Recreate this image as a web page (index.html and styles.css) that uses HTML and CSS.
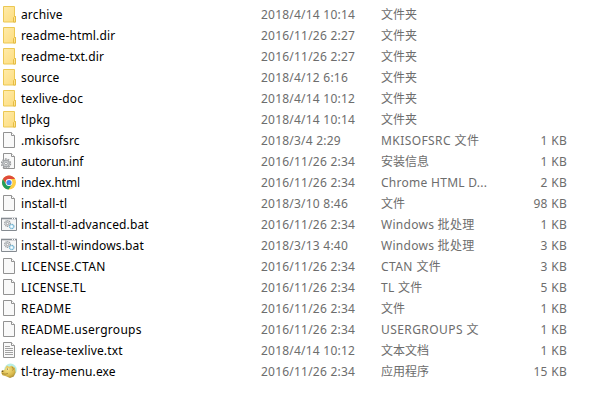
FILE: index.html
```html
<!DOCTYPE html>
<html lang="zh-CN">
<head>
<meta charset="utf-8">
<title>Files</title>
<link rel="stylesheet" href="styles.css">
</head>
<body>
<svg class="defs" width="0" height="0" aria-hidden="true">
  <linearGradient id="gold" x2="1" y2="1"><stop offset="0" stop-color="#ffebaa"/><stop offset="1" stop-color="#fddc7c"/></linearGradient>
  <radialGradient id="head" cx=".45" cy=".35" r=".75"><stop offset="0" stop-color="#f6e182"/><stop offset=".6" stop-color="#d9b94c"/><stop offset="1" stop-color="#987a2c"/></radialGradient>
  <symbol id="folder" viewBox="0 0 16 17">
    <path d="M2.500.5h11v10h1v5.500h-12z" fill="url(#gold)" stroke="#ecc853"/>
    <path d="M12.500 16v-4.500l1-1h1v5.500z" fill="#ffe391" stroke="#e5bc43"/>
  </symbol>
  <symbol id="page" viewBox="0 0 16 17">
    <path d="M2.500.5h8l3 3v12h-11z" fill="#f9f9f9" stroke="#929292"/>
    <path d="M10.500.5v3h3" fill="#fff" stroke="#929292"/>
  </symbol>
  <symbol id="text" viewBox="0 0 16 17">
    <use href="#page"/>
    <path d="M4 4.500h5M4 6.500h8M4 8.500h8M4 10.500h8M4 12.500h8" stroke="#a2a2a2"/>
  </symbol>
  <symbol id="inf" viewBox="0 0 16 17">
    <use href="#page"/>
    <circle cx="5" cy="10.500" r="4.500" fill="none" stroke="#96989a" stroke-width="1.400" stroke-dasharray="1.700 1.100"/>
    <circle cx="5" cy="10.500" r="3.200" fill="#d9dcde" stroke="#a4a7aa" stroke-width="1.400"/>
    <circle cx="5" cy="10.500" r="1.400" fill="#fff" stroke="#85898c" stroke-width=".8"/>
  </symbol>
  <symbol id="chrome" viewBox="0 0 16 17">
    <circle cx="8" cy="8.500" r="7" fill="#ffce43"/>
    <path d="M1.940 5A7 7 0 0 1 14.060 5H8L5 10.300z" fill="#df4a3b"/>
    <path d="M1.940 5A7 7 0 0 0 7.600 15.500L11 10.200L5 10.300z" fill="#239d5c"/>
    <circle cx="8" cy="8.500" r="3.400" fill="#fff"/>
    <circle cx="8" cy="8.500" r="2.600" fill="#4587ed"/>
  </symbol>
  <symbol id="bat" viewBox="0 0 16 17">
    <path d="M.5 2.500h15v12H.5z" fill="#f5f6f7" stroke="#858b91"/>
    <path d="M0 2.500h16" stroke="#858b91" stroke-width="1.600"/>
    <path d="M11 2.500h1M13 2.500h1" stroke="#fff"/>
    <circle cx="6.500" cy="7.500" r="2.800" fill="#e4e6e8" stroke="#95999d" stroke-width="1.200" stroke-dasharray="1.200 .6"/>
    <circle cx="6.500" cy="7.500" r="1.200" fill="#fff" stroke="#8b9095" stroke-width=".8"/>
    <circle cx="10.700" cy="10.500" r="2.200" fill="#d9f1fb" stroke="#74b3d1" stroke-width="1.200" stroke-dasharray="1.200 .4"/>
    <circle cx="10.700" cy="10.500" r=".8" fill="#fff"/>
  </symbol>
  <symbol id="lion" viewBox="0 0 16 17">
    <ellipse cx="9.500" cy="7" rx="6.300" ry="6.500" fill="#b9eee5"/>
    <path d="M4.500 4.500L6 2.500l2 1.200 2.800-1L14 5l.6 4.500-1.800 4-3.800 1.600L5 13.300l-3.500-1L.3 10l.6-2.300L4 6.500z" fill="url(#head)"/>
    <path d="M1 10.500l3 .7 3-.7M11 4l1.500 2-1 1.500" fill="none" stroke="#8a6c20" stroke-width=".6"/>
    <circle cx="6.800" cy="6" r="1.100" fill="#fff6b8"/><circle cx="6.600" cy="6" r=".55" fill="#302711"/>
    <ellipse cx="1.500" cy="8.300" rx="1" ry=".8" fill="#67501c"/>
  </symbol>
</svg>
<main class="files">
  <div class="row"><svg class="icon"><use href="#folder"/></svg><span class="name">archive</span><span class="date">2018/4/14 10:14</span><span class="type">文件夹</span><span class="size"></span></div>
  <div class="row"><svg class="icon"><use href="#folder"/></svg><span class="name">readme-html.dir</span><span class="date">2016/11/26 2:27</span><span class="type">文件夹</span><span class="size"></span></div>
  <div class="row"><svg class="icon"><use href="#folder"/></svg><span class="name">readme-txt.dir</span><span class="date">2016/11/26 2:27</span><span class="type">文件夹</span><span class="size"></span></div>
  <div class="row"><svg class="icon"><use href="#folder"/></svg><span class="name">source</span><span class="date">2018/4/12 6:16</span><span class="type">文件夹</span><span class="size"></span></div>
  <div class="row"><svg class="icon"><use href="#folder"/></svg><span class="name">texlive-doc</span><span class="date">2018/4/14 10:12</span><span class="type">文件夹</span><span class="size"></span></div>
  <div class="row"><svg class="icon"><use href="#folder"/></svg><span class="name">tlpkg</span><span class="date">2018/4/14 10:14</span><span class="type">文件夹</span><span class="size"></span></div>
  <div class="row"><svg class="icon"><use href="#page"/></svg><span class="name">.mkisofsrc</span><span class="date">2018/3/4 2:29</span><span class="type latin">MKISOFSRC 文件</span><span class="size">1 KB</span></div>
  <div class="row"><svg class="icon"><use href="#inf"/></svg><span class="name tight">autorun.inf</span><span class="date">2016/11/26 2:34</span><span class="type">安装信息</span><span class="size">1 KB</span></div>
  <div class="row"><svg class="icon"><use href="#chrome"/></svg><span class="name tight">index.html</span><span class="date">2016/11/26 2:34</span><span class="type mixed">Chrome HTML D...</span><span class="size">2 KB</span></div>
  <div class="row"><svg class="icon"><use href="#page"/></svg><span class="name">install-tl</span><span class="date">2018/3/10 8:46</span><span class="type">文件</span><span class="size">98 KB</span></div>
  <div class="row"><svg class="icon"><use href="#bat"/></svg><span class="name">install-tl-advanced.bat</span><span class="date">2016/11/26 2:34</span><span class="type mixed">Windows 批处理</span><span class="size">1 KB</span></div>
  <div class="row"><svg class="icon"><use href="#bat"/></svg><span class="name">install-tl-windows.bat</span><span class="date">2018/3/13 4:40</span><span class="type mixed">Windows 批处理</span><span class="size">3 KB</span></div>
  <div class="row"><svg class="icon"><use href="#page"/></svg><span class="name latin">LICENSE.CTAN</span><span class="date">2016/11/26 2:34</span><span class="type latin">CTAN 文件</span><span class="size">3 KB</span></div>
  <div class="row"><svg class="icon"><use href="#page"/></svg><span class="name mixed">LICENSE.TL</span><span class="date">2016/11/26 2:34</span><span class="type mixed">TL 文件</span><span class="size">5 KB</span></div>
  <div class="row"><svg class="icon"><use href="#page"/></svg><span class="name latin">README</span><span class="date">2016/11/26 2:34</span><span class="type">文件</span><span class="size">1 KB</span></div>
  <div class="row"><svg class="icon"><use href="#page"/></svg><span class="name mixed">README.usergroups</span><span class="date">2016/11/26 2:34</span><span class="type latin">USERGROUPS 文</span><span class="size">1 KB</span></div>
  <div class="row"><svg class="icon"><use href="#text"/></svg><span class="name">release-texlive.txt</span><span class="date">2018/4/14 10:12</span><span class="type">文本文档</span><span class="size">1 KB</span></div>
  <div class="row"><svg class="icon"><use href="#lion"/></svg><span class="name">tl-tray-menu.exe</span><span class="date">2016/11/26 2:34</span><span class="type">应用程序</span><span class="size">15 KB</span></div>
</main>
</body>
</html>
```
FILE: styles.css
```css
body {
  margin: 0;
  background: #fff;
  font: 12px/21px "Noto Sans", "Noto Sans CJK SC", sans-serif;
  color: #6d6d6d;
}

.defs {
  position: absolute;
}

.files {
  padding-top: 4px;
}

.row {
  display: grid;
  grid-template-columns: 16px 240px 120px 120px 70px;
  height: 21px;
  padding-left: 1px;
  white-space: nowrap;
}

.icon {
  width: 16px;
  height: 17px;
  margin-top: 2px;
}

.name {
  padding-left: 4px;
  color: #000;
  letter-spacing: 0.14px;
}

.date {
  padding-left: 4px;
  letter-spacing: 0.22px;
}

.type {
  padding-left: 4px;
}

.latin {
  letter-spacing: 0.42px;
}

.mixed {
  letter-spacing: 0.28px;
}

.tight {
  letter-spacing: -0.1px;
}

.size {
  text-align: right;
  letter-spacing: 0.3px;
}
```
